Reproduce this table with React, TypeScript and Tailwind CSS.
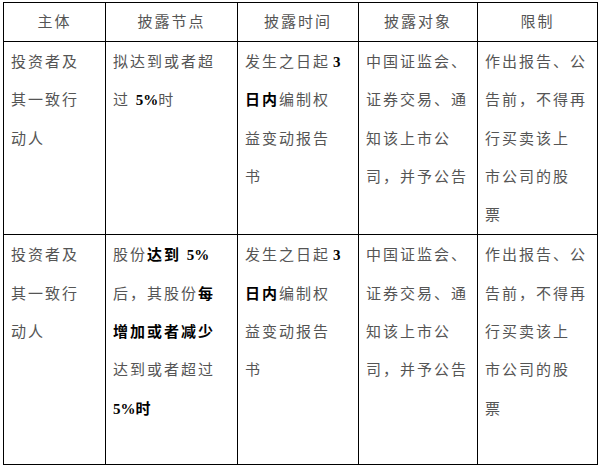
import type { ReactNode } from 'react';

type Line = ReactNode;

const B = ({ children }: { children: ReactNode }) => <span className="font-bold text-black">{children}</span>;
const N = ({ children }: { children: ReactNode }) => <span className="font-bold tracking-normal text-black">{children}</span>;

const headers = ['主体', '披露节点', '披露时间', '披露对象', '限制'];

const timeCell: Line[] = [
  <>发生之日起<span className="ml-[3px]"><N>3</N></span></>,
  <><B>日内</B>编制权</>,
  '益变动报告',
  '书',
];
const targetCell: Line[] = ['中国证监会、', '证券交易、通', '知该上市公', '司，并予公告'];
const limitCell: Line[] = ['作出报告、公', '告前，不得再', '行买卖该上', '市公司的股', '票'];
const subjectCell: Line[] = ['投资者及', '其一致行', '动人'];

const rows: Line[][][] = [
  [subjectCell, ['拟达到或者超', <>过 <N>5%</N>时</>], timeCell, targetCell, limitCell],
  [
    subjectCell,
    [
      <>股份<B>达到</B> <N>5%</N></>,
      <>后，其股份<B>每</B></>,
      <B>增加或者减少</B>,
      '达到或者超过',
      <><N>5%</N><B>时</B></>,
    ],
    timeCell,
    targetCell,
    limitCell,
  ],
];

const widths = ['w-[102px]', 'w-[132px]', 'w-[121px]', 'w-[119px]', 'w-[120px]'];
const rowHeights = ['h-[191px]', 'h-[230px]'];

export default function App() {
  return (
    <div className="min-h-[467px] w-[601px] bg-white pl-[3px] pt-[2px] font-['Liberation_Serif','Noto_Sans_CJK_SC',serif] text-[15px] tracking-[2px] text-[#555]">
      <table className="table-fixed border-collapse">
        <colgroup>
          {widths.map((w) => (
            <col key={w} className={w} />
          ))}
        </colgroup>
        <thead>
          <tr className="h-[39px]">
            {headers.map((h) => (
              <th key={h} className="border border-black p-0 text-center align-middle font-normal">
                {h}
              </th>
            ))}
          </tr>
        </thead>
        <tbody>
          {rows.map((row, ri) => (
            <tr key={ri} className={rowHeights[ri]}>
              {row.map((cell, ci) => (
                <td key={ci} className="border border-black pb-0 pl-[7px] pr-0 pt-px align-top leading-[38.3px]">
                  {cell.map((line, li) => (
                    <div key={li} className="whitespace-nowrap">
                      {line}
                    </div>
                  ))}
                </td>
              ))}
            </tr>
          ))}
        </tbody>
      </table>
    </div>
  );
}
